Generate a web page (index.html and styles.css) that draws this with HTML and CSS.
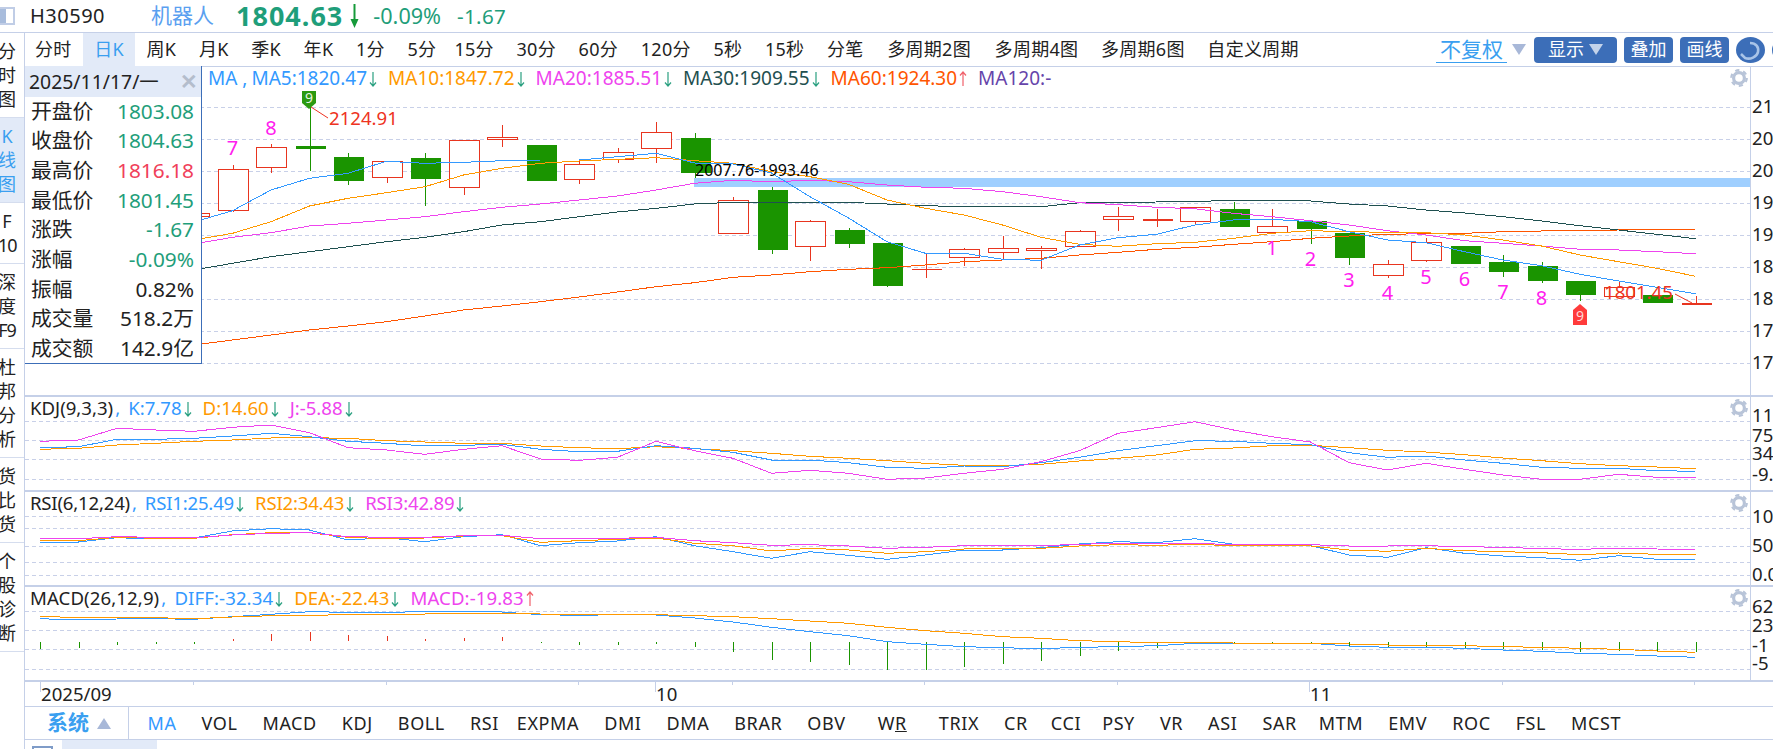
FILE: index.html
```html
<!DOCTYPE html>
<html lang="zh-CN">
<head>
<meta charset="utf-8">
<title>H30590 机器人</title>
<link rel="stylesheet" href="styles.css">
</head>
<body>
<svg class="defs" width="0" height="0" aria-hidden="true">
  <symbol id="gear" viewBox="0 0 18 18">
    <circle cx="9" cy="9" r="5.4" fill="none" stroke="currentColor" stroke-width="3.2"/>
    <circle cx="9" cy="9" r="7.8" fill="none" stroke="currentColor" stroke-width="2.2" stroke-dasharray="4.2 3.97"/>
  </symbol>
  <symbol id="ad" viewBox="0 0 8 16">
    <path d="M4 1V15M1 11.5L4 15L7 11.5" fill="none" stroke="currentColor" stroke-width="1.2"/>
  </symbol>
  <symbol id="au" viewBox="0 0 8 16">
    <path d="M4 15V1M1 4.5L4 1L7 4.5" fill="none" stroke="currentColor" stroke-width="1.2"/>
  </symbol>
</svg>
<header class="top">
  <span class="top-icon"></span>
  <span class="code">H30590</span>
  <span class="name">机器人</span>
  <span class="price">1804.63</span>
  <svg class="price-arrow" viewBox="0 0 9 24"><path d="M4.5 0V18" stroke="currentColor" stroke-width="2"/><path d="M0.5 15H8.5L4.5 24Z" fill="currentColor"/></svg>
  <span class="pct">-0.09%</span>
  <span class="chg">-1.67</span>
</header>
<div class="body">
  <nav class="side">
    <div class="side-item">分时图</div>
    <div class="side-item active">K线图</div>
    <div class="side-item">F<br><span class="tight">10</span></div>
    <div class="side-item">深度<br><span class="tight">F9</span></div>
    <div class="side-item">杜邦分析</div>
    <div class="side-item">货比货</div>
    <div class="side-item">个股诊断</div>
  </nav>
  <main class="main">
    <div class="tabs">
      <div class="tab-list">
        <span class="tab">分时</span><span class="tab on">日K</span><span class="tab">周K</span><span class="tab">月K</span><span class="tab">季K</span><span class="tab">年K</span><span class="tab">1分</span><span class="tab">5分</span><span class="tab">15分</span><span class="tab">30分</span><span class="tab">60分</span><span class="tab">120分</span><span class="tab">5秒</span><span class="tab">15秒</span><span class="tab">分笔</span><span class="tab">多周期2图</span><span class="tab">多周期4图</span><span class="tab">多周期6图</span><span class="tab">自定义周期</span>
      </div>
      <div class="tools">
        <span class="adj">不复权</span>
        <span class="tri tri-gray"></span>
        <span class="btn btn-show">显示<span class="tri tri-white"></span></span>
        <span class="btn">叠加</span>
        <span class="btn">画线</span>
        <span class="round"><svg viewBox="0 0 29 26" width="29" height="26"><path d="M14 6C20 6 23 10 22 15C21 20 14 23 9 21L5 17" fill="none" stroke="#a9c4e8" stroke-width="2.6"/></svg></span>
        <span class="round"></span>
      </div>
    </div>

    <section class="pane pane-main">
      <svg class="plot" id="plot-main"></svg>
      <div class="legend legend-main">
        <span class="c-ma5 ma-name">MA ,</span>
        <span class="c-ma5">MA5:1820.47<svg class="arr dn"><use href="#ad"/></svg></span>
        <span class="c-ma10">MA10:1847.72<svg class="arr dn"><use href="#ad"/></svg></span>
        <span class="c-ma20">MA20:1885.51<svg class="arr dn"><use href="#ad"/></svg></span>
        <span class="c-ma30">MA30:1909.55<svg class="arr dn"><use href="#ad"/></svg></span>
        <span class="c-ma60">MA60:1924.30<svg class="arr up"><use href="#au"/></svg></span>
        <span class="c-ma120">MA120:-</span>
      </div>
      <svg class="gear"><use href="#gear"/></svg>
      <aside class="tip">
        <div class="tip-head"><span>2025/11/17/一</span><span class="tip-x">✕</span></div>
        <div class="tip-row"><span>开盘价</span><b class="g">1803.08</b></div>
        <div class="tip-row"><span>收盘价</span><b class="g">1804.63</b></div>
        <div class="tip-row"><span>最高价</span><b class="r">1816.18</b></div>
        <div class="tip-row"><span>最低价</span><b class="g">1801.45</b></div>
        <div class="tip-row"><span>涨跌</span><b class="g">-1.67</b></div>
        <div class="tip-row"><span>涨幅</span><b class="g">-0.09%</b></div>
        <div class="tip-row"><span>振幅</span><b>0.82%</b></div>
        <div class="tip-row"><span>成交量</span><b>518.2万</b></div>
        <div class="tip-row"><span>成交额</span><b>142.9亿</b></div>
      </aside>
    </section>

    <section class="pane pane-sub">
      <svg class="plot" id="plot-kdj"></svg>
      <div class="legend">
        <span class="lead-name"><em>KDJ(9,3,3)</em><span class="c-ma5">,</span></span>
        <span class="c-ma5">K:7.78<svg class="arr dn"><use href="#ad"/></svg></span>
        <span class="c-ma10">D:14.60<svg class="arr dn"><use href="#ad"/></svg></span>
        <span class="c-ma20">J:-5.88<svg class="arr dn"><use href="#ad"/></svg></span>
      </div>
      <svg class="gear"><use href="#gear"/></svg>
    </section>

    <section class="pane pane-sub">
      <svg class="plot" id="plot-rsi"></svg>
      <div class="legend legend-rsi">
        <span class="lead-name"><em>RSI(6,12,24)</em><span class="c-ma5">,</span></span>
        <span class="c-ma5">RSI1:25.49<svg class="arr dn"><use href="#ad"/></svg></span>
        <span class="c-ma10">RSI2:34.43<svg class="arr dn"><use href="#ad"/></svg></span>
        <span class="c-ma20">RSI3:42.89<svg class="arr dn"><use href="#ad"/></svg></span>
      </div>
      <svg class="gear"><use href="#gear"/></svg>
    </section>

    <section class="pane pane-sub">
      <svg class="plot" id="plot-macd"></svg>
      <div class="legend legend-macd">
        <span class="lead-name"><em>MACD(26,12,9)</em><span class="c-ma5">,</span></span>
        <span class="c-ma5">DIFF:-32.34<svg class="arr dn"><use href="#ad"/></svg></span>
        <span class="c-ma10">DEA:-22.43<svg class="arr dn"><use href="#ad"/></svg></span>
        <span class="c-ma20">MACD:-19.83<svg class="arr up"><use href="#au"/></svg></span>
      </div>
      <svg class="gear"><use href="#gear"/></svg>
    </section>

    <div class="dates"><svg class="plot" id="plot-dates"></svg></div>

    <div class="inds">
      <div class="sys"><span class="sys-name">系统</span><span class="tri tri-up"></span></div>
      <div class="ind-list">
        <span class="ind on">MA</span><span class="ind">VOL</span><span class="ind">MACD</span><span class="ind">KDJ</span><span class="ind">BOLL</span><span class="ind">RSI</span><span class="ind">EXPMA</span><span class="ind">DMI</span><span class="ind">DMA</span><span class="ind">BRAR</span><span class="ind">OBV</span><span class="ind">W<u>R</u></span><span class="ind">TRIX</span><span class="ind">CR</span><span class="ind">CCI</span><span class="ind">PSY</span><span class="ind">VR</span><span class="ind">ASI</span><span class="ind">SAR</span><span class="ind">MTM</span><span class="ind">EMV</span><span class="ind">ROC</span><span class="ind">FSL</span><span class="ind">MCST</span>
      </div>
    </div>

    <div class="strip"><span class="strip-box"></span><span class="strip-tab"></span></div>
  </main>
</div>
<script src="script.js"></script>
</body>
</html>
```
FILE: styles.css
```css
* { box-sizing: border-box; }
html, body { margin: 0; padding: 0; }
body {
  width: 1773px; height: 749px; overflow: hidden; background: #fff; color: #222;
  font: 18px/1.2 "Noto Sans", "Noto Sans CJK SC", sans-serif;
}
.defs { position: absolute; }

.top { display: flex; align-items: center; height: 33px; border-bottom: 1px solid #c5d0e8; white-space: nowrap; }
.top-icon { width: 15px; height: 18px; border: 2px solid #c0cde6; border-left: 0; background: linear-gradient(90deg, #a8bcdc 0 6px, #fff 6px); flex: none; }
.code { margin-left: 15px; font-size: 20px; letter-spacing: .5px; color: #222; }
.name { margin-left: 46px; font-size: 21px; color: #5aa0f0; }
.price { margin-left: 22px; font-size: 27px; font-weight: 700; color: #1f9e7a; letter-spacing: 1px; }
.price-arrow { width: 9px; height: 24px; margin-left: 7px; color: #169a3a; }
.pct { margin-left: 14px; font-size: 21.6px; color: #1f9e7a; }
.chg { margin-left: 16px; font-size: 20.6px; color: #1f9e7a; letter-spacing: .3px; }

.body { display: flex; height: 716px; }
.side { width: 25px; flex: none; border-right: 1px solid #c5d0e8; overflow: hidden; }
.side-item { margin-left: -2px; width: 26px; padding: 6px 8px 6px 0; line-height: 24px; border-bottom: 1px solid #d5ddee; text-align: center; }
.side-item.active { background: #e2eaf8; color: #3a9ff0; }
.tight { letter-spacing: -1px; }

.main { flex: 1; min-width: 0; display: flex; flex-direction: column; }

.tabs { display: flex; height: 34px; flex: none; border-bottom: 1px solid #c5d0e8; overflow: hidden; white-space: nowrap; }
.tab-list { flex: 0 0 1411px; display: flex; margin-left: -2px; }
.tab { padding: 0 11.3px; line-height: 33px; letter-spacing: .3px; }
.tab:first-child { padding-left: 12px; }
.tab:nth-child(9) { margin-left: -4.5px; }
.tab:nth-child(16), .tab:nth-child(17) { margin-left: 1px; }
.tab.on { background: #e2eaf8; color: #3a9ff0; }
.tools { display: flex; align-items: center; gap: 7px; margin-left: 2px; flex: none; }
.adj { width: 71px; text-align: center; font-size: 21px; line-height: 26px; color: #3a9ff0; border-bottom: 1px solid #3a9ff0; }
.tri { display: inline-block; width: 0; height: 0; border-left: 7px solid transparent; border-right: 7px solid transparent; }
.tri-gray { border-top: 11px solid #a8b8d8; margin-left: -2px; margin-right: 1px; }
.tri-white { border-top: 11px solid #c3d3ea; margin-left: 5px; }
.tri-up { border-bottom: 11px solid #a8b8d8; margin-left: 8px; }
.btn { display: flex; align-items: center; justify-content: center; width: 49px; height: 26px; background: #3c6eb8; color: #fff; border-radius: 4px; }
.btn-show { width: 83px; }
.round { width: 29px; height: 26px; flex: none; border-radius: 50%; background: #3c6eb8; }
.round svg { display: block; }

.pane { position: relative; flex: none; border-bottom: 2px solid #c5d0e8; }
.pane-main { height: 330px; }
.pane-sub { height: 95px; }
.plot { display: block; width: 100%; height: 100%; overflow: hidden; }

.legend { position: absolute; left: 5px; top: 0; display: flex; gap: 11px; font-size: 18.6px; line-height: 22px; white-space: nowrap; }
.legend-main { left: 183px; font-size: 19px; }
.ma-name { margin-right: -7px; }
.legend-rsi { letter-spacing: -.2px; }
.legend-macd { letter-spacing: .1px; }
.arr { display: inline-block; width: 8px; height: 16px; margin-left: 2px; vertical-align: -2px; }
.legend em { font-style: normal; color: #222; margin-right: 2px; }
.lead-name { margin-right: -3px; }
.legend .dn { color: #2aa080; }
.legend .up { color: #f0606a; }
.c-ma5 { color: #3399ff; }
.c-ma10 { color: #ff9900; }
.c-ma20 { color: #ee44ee; }
.c-ma30 { color: #1f5050; }
.c-ma60 { color: #ff5500; }
.c-ma120 { color: #6644aa; }

.gear { position: absolute; left: 1705px; top: 2px; width: 18px; height: 18px; color: #b8c4d8; }

.tip { position: absolute; left: 0; top: -1px; width: 177px; height: 298px; background: #fff; border-right: 1px solid #3c6eb8; border-bottom: 1px solid #3c6eb8; font-size: 20.8px; }
.tip-head { display: flex; justify-content: space-between; align-items: center; height: 30.5px; padding: 0 3px 0 4px; background: #e2eaf8; color: #222; font-size: 19.4px; }
.tip-x { color: #b4bdcc; font-size: 21px; font-weight: 700; }
.tip-row { display: flex; justify-content: space-between; height: 29.7px; line-height: 29.7px; padding: 0 7px 0 6px; }
.tip-row b { font-weight: 400; }
.tip-row .g { color: #1f9e7a; }
.tip-row .r { color: #f0405a; }

.dates { height: 25px; flex: none; border-bottom: 1px solid #c5d0e8; }

.inds { display: flex; height: 33px; flex: none; border-bottom: 1px solid #c5d0e8; white-space: nowrap; }
.sys { display: flex; align-items: center; width: 104px; flex: none; padding-left: 22px; border-right: 1px solid #c5d0e8; }
.sys-name { font-weight: 700; color: #3a9ff0; font-size: 21px; }
.ind-list { display: flex; padding-left: 6px; }
.ind { padding: 0 12.5px; line-height: 32px; letter-spacing: .6px; }
.ind.on { color: #3399ff; }
.ind:nth-child(7) { margin-left: -7px; }
.ind:nth-child(12) { margin-left: 7px; }
.ind:nth-child(13) { margin-left: 7px; }
.ind:nth-child(15) { margin-left: -2px; }
.ind:nth-child(16) { margin-left: -4px; }
.ind:nth-child(20) { margin-left: -3px; }

.strip { display: flex; flex: 1; overflow: hidden; }
.strip-box { width: 21px; height: 8px; margin: 6px 0 0 7px; border: 2px solid #7f9cc8; flex: none; }
.strip-tab { width: 95px; height: 9px; margin-left: 9px; background: #e2eaf8; flex: none; }

.t { font: 18.6px "Noto Sans", "Noto Sans CJK SC", sans-serif; }
.t-axis { fill: #222; }
.t-mag { font-size: 20px; fill: #ff20ee; }
.t-red { fill: #ee3322; }
.t-blk { font-size: 16px; fill: #000; }
.t-tag { font-size: 14px; fill: #e6f5e0; }
.t-tag.on-red { fill: #ffd6d6; }
.grid { stroke: #c8d0e8; stroke-width: 1; stroke-dasharray: 4 3; shape-rendering: crispEdges; }
.axis { stroke: #c5d0e8; stroke-width: 1; shape-rendering: crispEdges; }
.tick { stroke: #c5d0e8; stroke-width: 1; shape-rendering: crispEdges; }
.band { fill: #9fcfff; }
.wick-r { stroke: #e8351f; shape-rendering: crispEdges; }
.wick-g { stroke: #1a9400; shape-rendering: crispEdges; }
.body-r { fill: #fff; stroke: #e8351f; shape-rendering: crispEdges; }
.body-rf { fill: #e8351f; shape-rendering: crispEdges; }
.body-g { fill: #1a9400; shape-rendering: crispEdges; }
.ln { fill: none; stroke-width: 1; shape-rendering: crispEdges; }
.ln-b { stroke: #3399ff; }
.ln-o { stroke: #ff9900; }
.ln-m { stroke: #ee44ee; }
.ln-d { stroke: #1f5050; }
.ln-r { stroke: #ff5500; }
.lead { stroke: #ee3322; stroke-width: 1; }
.tag-g { fill: #2b9a10; }
.tag-r { fill: #ff3b3b; }
```
FILE: script.js
```js
(function () {
  var NS = 'http://www.w3.org/2000/svg';
  function X(i) { return 232.5 + 38.5 * i; }

  function el(parent, name, attrs, text) {
    var e = document.createElementNS(NS, name);
    for (var k in attrs) e.setAttribute(k, attrs[k]);
    if (text !== undefined) e.textContent = text;
    parent.appendChild(e);
    return e;
  }
  function setup(id) {
    var svg = document.getElementById(id);
    var r = svg.getBoundingClientRect();
    svg.setAttribute('viewBox', r.left + ' ' + r.top + ' ' + r.width + ' ' + r.height);
    return { svg: svg, top: r.top, bottom: r.bottom };
  }
  function grid(svg, ys) {
    ys.forEach(function (y) {
      var yy = Math.round(y) + .5;
      el(svg, 'line', { x1: 25, x2: 1750, y1: yy, y2: yy, 'class': 'grid' });
    });
  }
  function axis(p, labels) {
    el(p.svg, 'line', { x1: 1750.5, x2: 1750.5, y1: p.top, y2: p.bottom, 'class': 'axis' });
    labels.forEach(function (l) {
      el(p.svg, 'text', { x: 1752, y: l[1] + 6.5, 'class': 't t-axis' }, l[0]);
    });
  }
  function line(svg, start, ys, cls) {
    var pts = ys.map(function (y, n) { return X(start + n).toFixed(1) + ',' + y; }).join(' ');
    el(svg, 'polyline', { points: pts, 'class': 'ln ' + cls });
  }
  function z(arr) { return arr.map(function (v) { return +(380 + v / 3).toFixed(1); }); }

  /* ---------- main K-line ---------- */
  var m = setup('plot-main');
  el(m.svg, 'rect', { x: 694, y: 178, width: 1056, height: 9, 'class': 'band' });
  grid(m.svg, [106.5, 138.5, 170.5, 202.5, 234.5, 266.5, 298.5, 330.5, 362.5]);

  /* i, colour, wick high, body top, body bottom, wick low */
  var candles = [
    [-1,'r',213,213.3,216.7,217],[0,'r',165,169.3,210.7,211.7],[1,'r',144,147.3,167.3,172.7],
    [2,'d',106.7,146,148.7,170.7],[3,'g',153.3,157,181,185],[4,'r',161.3,161.3,177.7,182.7],
    [5,'g',153.3,158,179,206],[6,'r',140.3,140.3,187.7,195],[7,'r',125,137.3,139.7,146.7],
    [8,'g',145,145,181,181],[9,'r',161.3,164.3,179.7,184],[10,'r',148,152.3,159,163.3],
    [11,'r',122,132.3,148.7,163],[12,'g',133,138,172.7,178.3],[13,'r',197,200.3,233.3,233.3],
    [14,'g',187.3,190,249.7,254],[15,'r',220,221.3,246.7,260.7],[16,'g',228,230,243.7,247.7],
    [17,'g',243,243,285.7,286.7],[18,'f',253.3,269,270,277.7],[19,'r',248.3,249.3,257.3,265.7],
    [20,'r',236,248.3,252.3,260],[21,'r',246,248.3,250.7,268.7],[22,'r',230,231.3,246.7,246.7],
    [23,'r',207,216.3,219.7,231],[24,'f',209,219,221,226.7],[25,'r',207.3,207.3,221.7,224],
    [26,'g',202,209,226.7,226.7],[27,'r',209,225.7,231.3,231.3],[28,'g',221.3,221.3,229,243.7],
    [29,'g',233,233,257.7,265],[30,'r',260,264.3,275.3,277.7],[31,'r',238.3,242.3,260.3,261.7],
    [32,'g',246,246,263.7,263.7],[33,'g',255,262,271.7,276.7],[34,'g',262.3,266,280.7,282.7],
    [35,'g',281,281,294.7,300.7],[36,'r',282,286.7,295.7,295.7],[37,'g',295,295,302.7,302.7],
    [38,'f',296,303,305,305]
  ];
  candles.forEach(function (c) {
    var x = Math.round(X(c[0])) + .5, t = c[1];
    var red = t === 'r' || t === 'f';
    el(m.svg, 'line', { x1: x, x2: x, y1: c[2], y2: c[5], 'class': red ? 'wick-r' : 'wick-g' });
    var attrs = { x: x - 15, y: Math.round(c[3]) + (t === 'r' ? .5 : 0), width: 30, height: Math.max(Math.round(c[4] - c[3]), 1) };
    attrs['class'] = t === 'r' ? 'body-r' : t === 'f' ? 'body-rf' : 'body-g';
    el(m.svg, 'rect', attrs);
  });

  line(m.svg, -1, [270,263.3,256.7,251.7,246.7,241.7,237.3,231.7,225,221.7,216.7,212,208.3,204,202.3,202.7,202.3,202.3,204,205.7,206.7,206.7,206.7,202.7,202.3,202,201.5,200.3,200.5,201,204,206,210,213,216.7,221,225.7,230,234.3,238.7], 'ln-d');
  line(m.svg, -1, [345,340,335,330,326,321.7,316,310,306,301.7,297,292,286.7,282.7,277.3,275,271.7,269.3,267.7,265,261.7,260,258.3,255,252.3,249.3,247.3,244.3,241.7,238.3,236,234.3,233.7,233.3,231.7,231,230.3,230,229.8,229.7], 'ln-r');
  line(m.svg, -1, [244,237.3,232.7,226,223.3,220,216.7,211.7,207.3,204,200,196,190,183.3,180.3,181.7,180.3,181.7,185,187.3,188.3,191.7,196.7,202.7,204.7,207.3,208.8,213.3,216.7,220.7,225,230.7,235,240.7,243.3,246,249.3,250,251.7,253.7], 'ln-m');
  line(m.svg, -1, [240,233.3,221.7,206,198.3,192.7,186.7,175,168.3,163.3,161,159.3,157.7,160.7,163.3,171.7,176.7,184.3,200,208.3,215,225,237.3,244.3,246.3,243.7,242.3,238.3,233.3,230.7,231.7,232.3,232.7,235,240,246,255,261.7,268.3,276.3], 'ln-o');
  line(m.svg, -1, [222,210.7,190,178.3,173.3,161.3,163.3,162.3,160.7,160,160,156.7,153.3,163,164,173,196.7,218,241.7,253.3,253.3,259.3,260.3,245,237.7,234.3,225,220,219.3,221.7,231.7,240,242.7,251.7,260,265.7,274.3,281,287.3,293.7], 'ln-b');

  [['7',0,148],['8',1,128],['1',27,248],['2',28,259],['3',29,280],['4',30,293],['5',31,277],['6',32,279],['7',33,292],['8',34,298]].forEach(function (l) {
    el(m.svg, 'text', { x: X(l[1]), y: l[2] + 7, 'text-anchor': 'middle', 'class': 't t-mag' }, l[0]);
  });

  el(m.svg, 'text', { x: 695, y: 176, 'class': 't t-blk' }, '2007.76-1993.46');
  el(m.svg, 'polygon', { points: '302,91 316,91 316,103 309,109 302,103', 'class': 'tag-g' });
  el(m.svg, 'text', { x: 309, y: 103, 'text-anchor': 'middle', 'class': 't t-tag' }, '9');
  el(m.svg, 'line', { x1: 311, y1: 107, x2: 328, y2: 118, 'class': 'lead' });
  el(m.svg, 'text', { x: 329, y: 125, 'class': 't t-red' }, '2124.91');
  el(m.svg, 'polygon', { points: '1580,304 1587,310 1587,325 1573,325 1573,310', 'class': 'tag-r' });
  el(m.svg, 'text', { x: 1580, y: 321, 'text-anchor': 'middle', 'class': 't t-tag on-red' }, '9');
  el(m.svg, 'text', { x: 1604, y: 299, 'class': 't t-red' }, '1801.45');
  el(m.svg, 'line', { x1: 1675, y1: 294, x2: 1692, y2: 303, 'class': 'lead' });
  axis(m, [['21',106.5],['20',138.5],['20',170.5],['19',202.5],['19',234.5],['18',266.5],['18',298.5],['17',330.5],['17',362.5]]);

  /* ---------- KDJ ---------- */
  var k = setup('plot-kdj');
  grid(k.svg, [421.3, 440.3, 459.3, 479.3]);
  line(k.svg, -5, z([208,205,195,190,184,180,174,173,175,182,186,190,190,198,203,206,200,206,212,220,229,235,242,250,256,257,253,243,235,225,208,204,197,196,203,211,216,224,234,242,251,257,261,266]), 'ln-o');
  line(k.svg, -5, z([203,200,178,178,175,168,160,170,184,190,198,196,193,208,215,214,197,205,217,240,240,248,262,265,258,260,248,232,212,197,182,184,190,194,218,232,228,240,250,262,265,265,272,274]), 'ln-b');
  line(k.svg, -5, z([184,180,145,150,154,142,135,158,203,210,223,208,197,237,241,232,184,212,235,280,271,280,298,294,280,268,245,212,160,143,125,150,170,186,248,270,250,268,285,298,298,283,292,292]), 'ln-m');
  axis(k, [['11',415],['75',435],['34',453],['-9.',474]]);

  /* ---------- RSI ---------- */
  var r = setup('plot-rsi');
  grid(r.svg, [516.3, 528.3, 545.6, 562.3, 574.7]);
  line(r.svg, -5, z([486,486,473,477,474,453,446,450,480,473,485,470,464,497,488,483,470,497,515,535,515,526,538,525,510,510,503,492,485,488,476,493,496,497,525,532,503,520,528,533,541,527,538,539]), 'ln-b');
  line(r.svg, -5, z([482,482,472,475,475,464,458,458,472,476,474,468,467,487,482,478,474,490,497,513,505,510,520,515,507,505,505,498,494,496,493,497,497,498,510,514,505,512,515,518,524,519,523,523]), 'ln-o');
  line(r.svg, -5, z([476,476,470,472,473,465,460,458,470,472,472,467,466,476,476,475,472,482,488,496,494,498,505,502,497,497,497,493,490,490,491,493,494,494,498,498,497,500,502,506,508,505,507,509]), 'ln-m');
  axis(r, [['10',516],['50',545],['0.0',574]]);

  /* ---------- MACD ---------- */
  var c = setup('plot-macd');
  grid(c.svg, [611.3, 630.3, 649.3, 669.3]);
  var hist = [806,804,795,792,792,-777,-762,-756,-765,-768,-777,-773,-770,788,795,795,792,801,816,840,846,855,870,870,861,852,843,828,813,804,792,792,790,790,798,802,802,804,807,810,815,813,815,816];
  hist.forEach(function (v, n) {
    var x = Math.round(X(n - 5)) + .5;
    if (v < 0) el(c.svg, 'line', { x1: x, x2: x, y1: 380 - v / 3, y2: 380 + 782 / 3, 'class': 'wick-r' });
    else el(c.svg, 'line', { x1: x, x2: x, y1: 380 + 786 / 3, y2: 380 + v / 3, 'class': 'wick-g' });
  });
  line(c.svg, -5, z([716,720,717,716,718,710,703,695,697,697,695,695,696,704,706,704,705,714,726,742,755,767,785,793,800,803,806,802,800,797,790,789,790,790,798,802,802,805,810,814,820,823,828,832]), 'ln-b');
  line(c.svg, -5, z([710,712,713,713,716,711,707,706,704,703,702,700,700,702,704,703,704,707,710,716,723,730,742,752,760,770,775,782,785,788,788,789,790,790,792,795,797,797,800,802,805,808,813,817]), 'ln-o');
  axis(c, [['62',606],['23',625],['-1',645],['-5',663]]);

  /* ---------- date axis ---------- */
  var d = setup('plot-dates');
  [[40.5,10],[193.5,3],[386.5,3],[578.5,3],[655.5,10],[732.5,3],[924.5,3],[1117.5,3],[1309.5,10],[1502.5,3],[1694.5,3]].forEach(function (t) {
    el(d.svg, 'line', { x1: t[0], x2: t[0], y1: d.top, y2: d.top + t[1], 'class': 'tick' });
  });
  [['2025/09',41],['10',656],['11',1310]].forEach(function (t) {
    el(d.svg, 'text', { x: t[1], y: 701, 'class': 't t-axis' }, t[0]);
  });
})();
```
